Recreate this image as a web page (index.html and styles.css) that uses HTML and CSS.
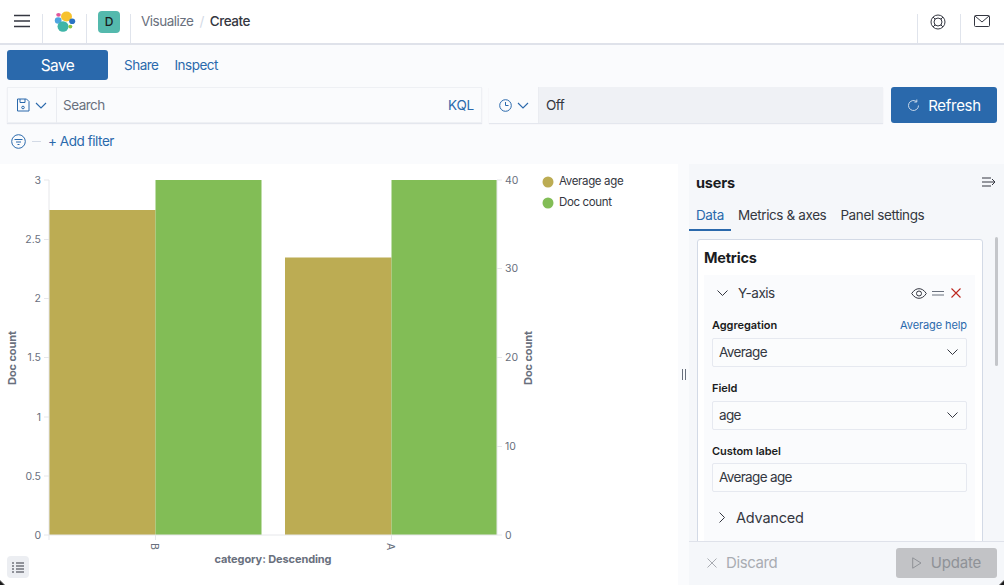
FILE: index.html
```html
<!DOCTYPE html>
<html lang="en">
<head>
<meta charset="utf-8">
<title>Visualize - Create</title>
<link rel="stylesheet" href="styles.css">
</head>
<body>
<header class="topbar">
  <div class="cell cell-menu">
    <svg width="16" height="14" viewBox="0 0 16 14"><path d="M0 1.5h16M0 7h16M0 12.500h16" stroke="#343741" stroke-width="1.700" fill="none"/></svg>
  </div>
  <div class="cell cell-logo">
    <svg width="22" height="22" viewBox="0 0 22 22">
      <ellipse cx="4.500" cy="3.800" rx="2.300" ry="1.900" fill="#e0569b"/>
      <ellipse cx="12.500" cy="5.500" rx="5.500" ry="5" fill="#f7c22f"/>
      <ellipse cx="4.200" cy="9.500" rx="3.400" ry="3.200" fill="#4da5e0"/>
      <ellipse cx="18.200" cy="10.200" rx="3" ry="2.800" fill="#2a73c4"/>
      <ellipse cx="9" cy="15.500" rx="5.500" ry="5.200" fill="#3fb5a8"/>
      <ellipse cx="16.300" cy="15.600" rx="2" ry="1.900" fill="#8cc63f"/>
    </svg>
  </div>
  <div class="cell cell-avatar"><span class="avatar">D</span></div>
  <nav class="crumbs">
    <span class="crumb-link">Visualize</span>
    <span class="crumb-sep">/</span>
    <span class="crumb-current">Create</span>
  </nav>
  <div class="cell cell-help">
    <svg width="16" height="16" viewBox="0 0 16 16" fill="none" stroke="#343741" stroke-width="1"><circle cx="8" cy="8" r="7"/><circle cx="8" cy="8" r="4"/><path d="M3 3l2.200 2.200M13 3l-2.200 2.200M3 13l2.200-2.200M13 13l-2.200-2.200"/></svg>
  </div>
  <div class="cell cell-mail">
    <svg width="16" height="13" viewBox="0 0 16 13" fill="none" stroke="#343741" stroke-width="1"><rect x=".5" y=".5" width="15" height="11" rx="1"/><path d="M1 1l7 6 7-6"/></svg>
  </div>
</header>

<div class="actions">
  <button class="btn-save">Save</button>
  <span class="action-link action-share">Share</span>
  <span class="action-link">Inspect</span>
</div>

<div class="querybar">
  <div class="search">
    <div class="prepend">
      <svg width="14" height="14" viewBox="0 0 14 14" fill="none" stroke="#2a69ac" stroke-width="1"><path d="M1.500 1h9l2.500 2.500v9.500h-11.500z"/><path d="M4 1v3.500h5V1"/><circle cx="7" cy="9.500" r="1.300"/></svg>
      <svg width="12" height="7" viewBox="0 0 12 7" fill="none" stroke="#2a69ac" stroke-width="1.100"><path d="M1 1l5 5 5-5"/></svg>
    </div>
    <span class="search-text">Search</span>
    <span class="kql">KQL</span>
  </div>
  <div class="timer">
    <div class="prepend">
      <svg width="13" height="13" viewBox="0 0 13 13" fill="none" stroke="#2a69ac" stroke-width="1"><circle cx="6.500" cy="6.500" r="5.800"/><path d="M6.500 3v3.500h3"/></svg>
      <svg width="12" height="7" viewBox="0 0 12 7" fill="none" stroke="#2a69ac" stroke-width="1.100"><path d="M1 1l5 5 5-5"/></svg>
    </div>
    <span class="timer-text">Off</span>
  </div>
  <button class="btn-refresh">
    <svg width="12" height="13" viewBox="0 0 12 13" fill="none" stroke="#c9d9ea" stroke-width="1"><path d="M9.500 2.500a5 5 0 1 0 2 4"/><path d="M9.800 .5v2.500h-2.500"/></svg>
    Refresh
  </button>
</div>

<div class="filterbar">
  <svg width="15" height="15" viewBox="0 0 15 15" fill="none" stroke="#2a69ac" stroke-width="1"><circle cx="7.500" cy="7.500" r="6.800"/><path d="M3.500 5.500h8M5 8h5M6.500 10.500h2"/></svg>
  <span class="filter-dash"></span>
  <span class="add-filter">+ Add filter</span>
</div>

<main class="workspace">
  <section class="chart-area">
    <svg class="chart" width="678" height="421" viewBox="0 164 678 421">
      <g fill="#bcac53">
        <rect x="49" y="210" width="106.500" height="325"/>
        <rect x="285" y="257.500" width="106.500" height="277.500"/>
      </g>
      <g fill="#82bd56">
        <rect x="155.500" y="180" width="106" height="355"/>
        <rect x="391.500" y="180" width="105.500" height="355"/>
      </g>
      <g stroke="#e6e7ea" fill="none">
        <path d="M49 180v360M49 535h448M497 180v355"/>
        <path d="M44 180h5M44 239.500h5M44 298.500h5M44 357.500h5M44 417h5M44 476h5M44 535h5"/>
        <path d="M497 180h5M497 268.500h5M497 357.500h5M497 446.500h5M497 535h5"/>
        <path d="M155.500 535v5M391.500 535v5"/>
      </g>
      <g class="tick tick-left">
        <text x="41" y="184">3</text>
        <text x="41" y="243">2.5</text>
        <text x="41" y="302">2</text>
        <text x="41" y="361">1.5</text>
        <text x="41" y="421">1</text>
        <text x="41" y="480">0.5</text>
        <text x="41" y="539">0</text>
      </g>
      <g class="tick">
        <text x="505" y="184">40</text>
        <text x="505" y="272">30</text>
        <text x="505" y="361">20</text>
        <text x="505" y="450">10</text>
        <text x="505" y="539">0</text>
      </g>
      <text class="tick" transform="translate(151 543) rotate(90)">B</text>
      <text class="tick" transform="translate(387 543) rotate(90)">A</text>
      <text class="axis-title" transform="translate(16 358) rotate(-90)">Doc count</text>
      <text class="axis-title" transform="translate(532 358) rotate(-90)">Doc count</text>
      <text class="axis-title" x="273" y="563">category: Descending</text>
      <circle cx="548" cy="182" r="5.500" fill="#bcac53"/>
      <circle cx="548" cy="203" r="5.500" fill="#82bd56"/>
      <text class="legend" x="559" y="185">Average age</text>
      <text class="legend" x="559" y="206">Doc count</text>
    </svg>
    <button class="legend-toggle">
      <svg width="12" height="11" viewBox="0 0 12 11" fill="none" stroke="#343741" stroke-width="1"><path d="M0 1h2M4 1h8M0 4h2M4 4h8M0 7h2M4 7h8M0 10h2M4 10h8"/></svg>
    </button>
  </section>

  <div class="resizer"><span></span><span></span></div>

  <aside class="panel">
    <div class="panel-head">
      <h2>users</h2>
      <svg width="14" height="10" viewBox="0 0 14 10" fill="none" stroke="#343741" stroke-width="1"><path d="M0 1h9M0 5h13M0 9h9M10 2l3 3-3 3"/></svg>
    </div>
    <div class="tabs">
      <span class="tab tab-active">Data</span>
      <span class="tab">Metrics &amp; axes</span>
      <span class="tab">Panel settings</span>
    </div>
    <div class="panel-body">
      <div class="card">
        <h3>Metrics</h3>
        <div class="agg">
          <div class="agg-head">
            <svg width="11" height="6" viewBox="0 0 11 6" fill="none" stroke="#343741" stroke-width="1"><path d="M.5 .5l5 5 5-5"/></svg>
            <span class="agg-title">Y-axis</span>
            <svg class="agg-eye" width="16" height="11" viewBox="0 0 16 11" fill="none" stroke="#343741" stroke-width="1"><path d="M.7 5.500C3 2 5.500 .7 8 .7s5 1.300 7.300 4.800C13 9 10.500 10.300 8 10.300S3 9 .7 5.500z"/><circle cx="8" cy="5.500" r="2.500"/></svg>
            <svg width="12" height="5" viewBox="0 0 12 5" fill="none" stroke="#69707d" stroke-width="1"><path d="M0 .5h12M0 4h12"/></svg>
            <svg class="agg-x" width="10" height="10" viewBox="0 0 10 10" fill="none" stroke="#bd271e" stroke-width="1.100"><path d="M.5 .5l9 9M9.500 .5l-9 9"/></svg>
          </div>
          <div class="label-row"><label>Aggregation</label><span class="help">Average help</span></div>
          <div class="field">Average
            <svg width="11" height="6" viewBox="0 0 11 6" fill="none" stroke="#343741" stroke-width="1"><path d="M.5 .5l5 5 5-5"/></svg>
          </div>
          <div class="label-row"><label>Field</label></div>
          <div class="field">age
            <svg width="11" height="6" viewBox="0 0 11 6" fill="none" stroke="#343741" stroke-width="1"><path d="M.5 .5l5 5 5-5"/></svg>
          </div>
          <div class="label-row"><label>Custom label</label></div>
          <div class="field">Average age</div>
          <div class="advanced">
            <svg width="6" height="11" viewBox="0 0 6 11" fill="none" stroke="#343741" stroke-width="1"><path d="M.5 .5l5 5-5 5"/></svg>
            <span>Advanced</span>
          </div>
        </div>
      </div>
      <span class="scrollbar"></span>
    </div>
    <div class="panel-foot">
      <span class="discard">
        <svg width="10" height="10" viewBox="0 0 10 10" fill="none" stroke="#a9acb2" stroke-width="1"><path d="M.5 .5l9 9M9.500 .5l-9 9"/></svg>
        Discard
      </span>
      <button class="btn-update">
        <svg width="10" height="12" viewBox="0 0 10 12" fill="none" stroke="#8f9297" stroke-width="1"><path d="M.7 .8l8.300 5.200-8.300 5.200z"/></svg>
        Update
      </button>
    </div>
  </aside>
</main>
</body>
</html>
```

FILE: styles.css
```css
* { box-sizing: border-box; }
html, body { margin: 0; height: 100%; }
body {
  position: relative;
  width: 1004px;
  height: 585px;
  overflow: hidden;
  display: flex;
  flex-direction: column;
  background: #fafbfd;
  color: #343741;
  font-family: Inter, "Liberation Sans", sans-serif;
  font-size: 13.500px;
  letter-spacing: -0.5px;
}
body::before, body::after {
  content: "";
  position: absolute;
  bottom: 0;
  width: 5px;
  height: 5px;
  z-index: 2;
}
body::before { left: 0; background: linear-gradient(45deg, #1a1a1a 35%, transparent 60%); }
body::after { right: 0; background: linear-gradient(-45deg, #1a1a1a 35%, transparent 60%); }
button { font-family: inherit; border: 0; letter-spacing: inherit; }

.topbar {
  height: 45px;
  flex: none;
  display: flex;
  align-items: stretch;
  background: #fff;
  border-bottom: 2px solid #dfe2ea;
}
.cell { display: flex; align-items: center; justify-content: center; position: relative; }
.cell::after {
  content: "";
  position: absolute;
  right: 0;
  top: 14px;
  bottom: 0;
  width: 1px;
  background: #e0e4ec;
}
.cell-menu, .cell-logo, .cell-avatar { width: 44px; }
.cell-menu { width: 43px; padding-bottom: 2px; }
.cell-logo { padding-top: 1px; }
.avatar {
  width: 22px;
  height: 22px;
  border-radius: 4px;
  background: #54b9ad;
  color: #1a1c21;
  font-size: 12px;
  font-weight: 500;
  letter-spacing: 0;
  display: flex;
  align-items: center;
  justify-content: center;
}
.crumbs { flex: 1; display: flex; align-items: center; gap: 6px; padding: 0 0 2px 10px; }
.crumb-link { color: #69707d; }
.crumb-sep { color: #d3dae6; }
.crumb-current { color: #343741; font-weight: 500; }
.cell-help { width: 43px; padding-right: 1px; }
.cell-help::after { right: auto; left: 0; }
.cell-mail { width: 44px; }
.cell-mail::after { right: auto; left: 0; }

.actions {
  flex: none;
  display: flex;
  align-items: center;
  padding: 5px 0 1px 7px;
  height: 36px;
}
.btn-save {
  width: 101px;
  height: 30px;
  border-radius: 3px;
  background: #2a69ac;
  color: #fff;
  font-size: 15.500px;
  font-weight: 400;
  letter-spacing: -0.6px;
}
.action-link { color: #2a69ac; margin-left: 16px; }

.querybar {
  flex: none;
  display: flex;
  align-items: stretch;
  height: 36px;
  margin-top: 6px;
  padding: 0 7px;
  gap: 7px;
}
.search {
  width: 475px;
  display: flex;
  align-items: center;
  background: #fafbfd;
  box-shadow: inset 0 0 0 1px #eef0f4, 0 1px 1px #e4e7ee;
  padding-right: 8px;
}
.prepend {
  width: 50px;
  height: 100%;
  flex: none;
  display: flex;
  align-items: center;
  justify-content: center;
  gap: 5px;
  border-right: 1px solid #eaecf1;
}
.search-text { flex: 1; padding-left: 6px; color: #69707d; }
.kql { color: #2a69ac; letter-spacing: -0.2px; }
.timer {
  width: 394px;
  display: flex;
  align-items: center;
  background: #eff1f5;
  box-shadow: 0 1px 1px #e4e7ee;
}
.timer .prepend { background: #fafbfd; }
.timer-text { padding-left: 7px; color: #343741; }
.btn-refresh {
  width: 106px;
  margin-left: 1px;
  border-radius: 3px;
  background: #2a69ac;
  color: #fff;
  font-size: 15px;
  font-weight: 400;
  letter-spacing: -0.3px;
  display: flex;
  align-items: center;
  justify-content: center;
  gap: 9px;
}

.filterbar {
  flex: none;
  height: 36px;
  margin-bottom: 5px;
  display: flex;
  align-items: center;
  padding-left: 11px;
}
.filter-dash { width: 9px; height: 1px; background: #d3dae6; margin: 0 7px 0 6px; }
.add-filter { color: #2a69ac; letter-spacing: -0.45px; }

.workspace { flex: 1; display: flex; min-height: 0; }
.chart-area { width: 678px; background: #fff; position: relative; flex: none; }
.chart { display: block; }
.tick { font-size: 10.500px; letter-spacing: 0; fill: #69707d; }
.tick-left { text-anchor: end; }
.axis-title { font-size: 11px; letter-spacing: -0.1px; font-weight: 700; fill: #69707d; text-anchor: middle; }
.legend { font-size: 11.500px; letter-spacing: -0.35px; fill: #343741; }
.legend-toggle {
  position: absolute;
  left: 7px;
  bottom: 7px;
  width: 22px;
  height: 22px;
  padding: 0;
  border-radius: 4px;
  background: #eceef2;
  display: flex;
  align-items: center;
  justify-content: center;
}

.resizer { width: 11px; flex: none; display: flex; justify-content: center; align-items: center; gap: 2px; }
.resizer span { width: 1px; height: 11px; background: #69707d; }

.panel {
  flex: 1;
  min-width: 0;
  display: flex;
  flex-direction: column;
  background: #f5f7fa;
}
.panel-head {
  flex: none;
  height: 36px;
  display: flex;
  align-items: center;
  justify-content: space-between;
  padding: 0 8px 0 7px;
}
.panel-head h2 { margin: 0; font-size: 14.500px; font-weight: 700; letter-spacing: -0.2px; color: #1a1c21; }
.tabs { flex: none; display: flex; height: 31px; letter-spacing: -0.38px; }
.tab { padding: 7px 7px 0; color: #343741; white-space: nowrap; }
.tab-active { color: #2a69ac; border-bottom: 2px solid #2a69ac; }
.panel-body { flex: 1; min-height: 0; overflow: hidden; position: relative; padding: 8px 0 0 8px; }
.card {
  width: 286px;
  height: 330px;
  background: #fff;
  border: 1px solid #d3dae6;
  border-radius: 3px;
  padding: 0 7px 0 6px;
}
.card h3 { margin: 0; height: 35px; padding-top: 9px; font-size: 14.500px; line-height: 18px; font-weight: 700; letter-spacing: -0.2px; color: #1a1c21; }
.agg { background: #fafbfd; padding: 0 8px; height: 300px; }
.agg-head { height: 36px; display: flex; align-items: center; gap: 5px; padding: 0 6px 0 5px; }
.agg-title { flex: 1; margin-left: 5px; color: #343741; }
.agg-x { margin-left: 2px; }
.label-row { display: flex; justify-content: space-between; align-items: center; height: 16px; margin-top: 6px; margin-bottom: 5px; }
.label-row label { font-size: 11px; font-weight: 600; letter-spacing: -0.05px; color: #1a1c21; }
.help { font-size: 11px; letter-spacing: -0.1px; color: #2a69ac; }
.field {
  height: 29px;
  background: #fbfcfd;
  border: 1px solid #e6e9f0;
  border-radius: 2px;
  padding: 0 8px 1px 6px;
  display: flex;
  align-items: center;
  justify-content: space-between;
  letter-spacing: -0.65px;
  color: #343741;
}
.field + .label-row { margin-top: 13px; margin-bottom: 5px; }
.field + .label-row + .field + .label-row { margin-bottom: 4px; }
.advanced { display: flex; align-items: center; gap: 11px; height: 36px; margin-top: 7px; padding-left: 7px; font-size: 14.500px; letter-spacing: -0.2px; color: #343741; }
.scrollbar { position: absolute; left: 306px; top: 6px; width: 3px; height: 129px; background: #c4c6ca; border-radius: 2px; }

.panel-foot {
  flex: none;
  height: 44px;
  display: flex;
  align-items: center;
  justify-content: space-between;
  padding: 0 7px 2px 18px;
  background: #f5f7fa;
  border-top: 1px solid #dfe2ea;
  position: relative;
}
.discard { display: flex; align-items: center; gap: 9px; color: #a9acb2; font-size: 15px; letter-spacing: -0.4px; }
.btn-update {
  width: 101px;
  height: 30px;
  border-radius: 3px;
  background: #c2c3c6;
  color: #8f9297;
  font-size: 15px;
  font-weight: 400;
  letter-spacing: -0.2px;
  display: flex;
  align-items: center;
  justify-content: center;
  gap: 9px;
}
```
